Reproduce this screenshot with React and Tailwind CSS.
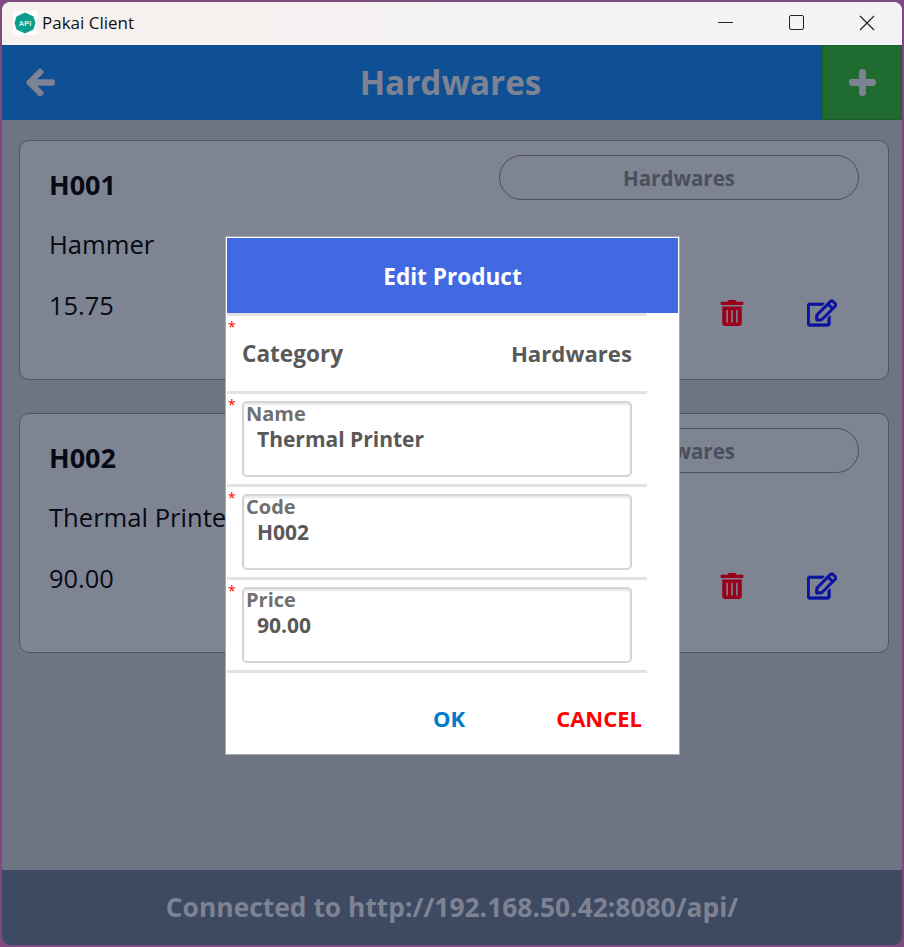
import React from 'react';
import { FaArrowLeft, FaPlus, FaTrashAlt, FaRegEdit } from 'react-icons/fa';

const products = [
  { code: 'H001', name: 'Hammer', price: '15.75', category: 'Hardwares' },
  { code: 'H002', name: 'Thermal Printer', price: '90.00', category: 'Hardwares' },
];

const fields = [
  { label: 'Name', value: 'Thermal Printer' },
  { label: 'Code', value: 'H002' },
  { label: 'Price', value: '90.00' },
];

function AppIcon() {
  return (
    <svg width="24" height="24" viewBox="0 0 24 24" className="bg-white">
      <path d="M12 1.5 20.5 5.5 22.5 12 20.5 18.5 12 22.5 3.5 18.5 1.5 12 3.5 5.5Z" fill="#0d9d8c" />
      <text x="12" y="15" textAnchor="middle" fontSize="7.5" fontWeight="700" fill="#d5f3ee" fontFamily="'Liberation Sans', sans-serif">API</text>
    </svg>
  );
}

function ProductCard({ product }) {
  return (
    <div className="h-[240px] rounded-[10px] border border-[#4f5463] bg-[#7f8492] pl-[29px] pr-[29px] pt-[14px] flex flex-col">
      <div className="flex justify-between items-start">
        <div className="pt-[12px] text-[27px] leading-[36px] font-bold text-[#050a14]">{product.code}</div>
        <div className="w-[360px] h-[45px] pt-[1px] rounded-full border border-[#4a4f5d] flex items-center justify-center text-[20.5px] font-bold text-[#4a4f5c]">
          {product.category}
        </div>
      </div>
      <div className="flex-1 flex justify-between">
        <div>
          <div className="mt-[24px] text-[25.6px] leading-[36px] text-[#050a14]">{product.name}</div>
          <div className="mt-[24px] text-[25.4px] leading-[36px] text-[#050a14]">{product.price}</div>
        </div>
        <div className="flex items-start gap-[62px] pt-[97px] pr-[22px]">
          <FaTrashAlt className="text-[#99001a]" size={26} />
          <FaRegEdit className="text-[#0a14a0] -mt-[2px]" size={30} stroke="currentColor" strokeWidth={14} />
        </div>
      </div>
    </div>
  );
}

export default function App() {
  return (
    <div className="relative w-[904px] h-[947px] bg-[#7f4a7f] p-[2px] overflow-hidden" style={{ fontFamily: "'Open Sans', 'Noto Sans', sans-serif" }}>
      <div className="relative w-full h-full flex flex-col bg-[#6f7482] rounded-[8px] overflow-hidden">
        {/* Title bar */}
        <div className="h-[43px] shrink-0 bg-[linear-gradient(90deg,#f6f1ee,#f3f3f6)] flex items-center pl-[11px] pb-[2px]">
          <AppIcon />
          <span className="ml-[5px] text-[17px] text-[#111]">Pakai Client</span>
          <div className="ml-auto flex items-center pr-[1px]">
            <div className="w-[71px] flex justify-center"><div className="w-[15px] h-px bg-[#222]" /></div>
            <div className="w-[71px] flex justify-center"><div className="w-[15px] h-[15px] rounded-[2px] border-[1.5px] border-[#222]" /></div>
            <div className="w-[69px] flex justify-center">
              <svg width="16" height="16" viewBox="0 0 16 16"><path d="M1 1 15 15M15 1 1 15" stroke="#222" strokeWidth="1.2" /></svg>
            </div>
          </div>
        </div>

        {/* Header */}
        <div className="h-[75px] shrink-0 bg-[#0f4f93] flex items-center">
          <div className="w-[77px] flex justify-center"><FaArrowLeft className="text-[#7d8393]" size={31} stroke="currentColor" strokeWidth={24} /></div>
          <div className="flex-1 text-center text-[33.3px] font-bold text-[#7d8393]">Hardwares</div>
          <div className="w-[80px] h-full pl-[1px] bg-[#1f6b30] border border-[#1a5f2a] flex items-center justify-center"><FaPlus className="text-[#7d8393]" size={29} stroke="currentColor" strokeWidth={24} /></div>
        </div>

        {/* List */}
        <div className="flex-1 pl-[17px] pr-[13px] pt-[20px] flex flex-col gap-[33px]">
          {products.map((p) => <ProductCard key={p.code} product={p} />)}
        </div>

        {/* Footer */}
        <div className="h-[75px] shrink-0 bg-[#3e4a62] flex items-center justify-center text-[26.4px] font-bold text-[#7d8393]">
          Connected to http://192.168.50.42:8080/api/
        </div>
      </div>

      {/* Edit dialog */}
      <div className="absolute left-[225px] top-[236px] w-[455px] h-[519px] bg-white border border-[#a6a9b0] p-px flex flex-col">
        <div className="h-[75px] shrink-0 bg-[#4169e1] flex items-center justify-center pt-[2px] text-[22.6px] font-bold text-white">Edit Product</div>
        <div className="w-[420px] flex flex-col">
          <div className="relative h-[81px] border-t-[3px] border-b-[3px] border-[#e2e2e2] flex items-center justify-between pl-[15px] pr-[15px]">
            <span className="absolute left-[1px] top-[3px] text-[14px] leading-[16px] text-[#f00]">*</span>
            <span className="text-[22.6px] font-bold text-[#595959]">Category</span>
            <span className="text-[22.2px] font-bold text-[#595959]">Hardwares</span>
          </div>
          {fields.map((f) => (
            <div key={f.label} className="relative h-[93px] border-b-[3px] border-[#e2e2e2] pl-[15px] pr-[15px] pt-[7px]">
              <span className="absolute left-[1px] top-[3px] text-[14px] leading-[16px] text-[#f00]">*</span>
              <div className="h-[76px] rounded-[5px] border-2 border-[#d4d4d4] shadow-[inset_0_2px_2px_#e8e8e8] pl-[2px]">
                <div className="text-[20px] leading-[20px] pt-px font-bold text-[#707070]">{f.label}</div>
                <div className="pl-[11px] pt-[2px] text-[21px] leading-[27px] font-bold text-[#595959]">{f.value}</div>
              </div>
            </div>
          ))}
        </div>
        <div className="flex-1 flex items-center justify-end pr-[36px] gap-[91px] pt-[10px]">
          <span className="text-[22px] font-bold text-[#007acc]">OK</span>
          <span className="text-[22px] font-bold text-[#ff0000]">CANCEL</span>
        </div>
      </div>
    </div>
  );
}
